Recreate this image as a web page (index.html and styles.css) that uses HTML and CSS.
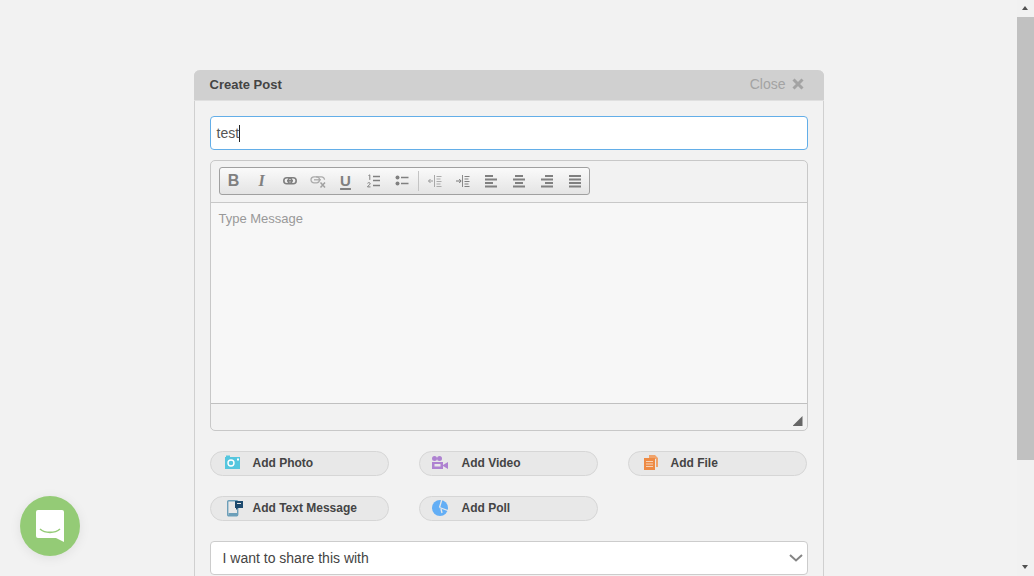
FILE: index.html
```html
<!DOCTYPE html>
<html lang="en">
<head>
  <meta charset="UTF-8">
  <title>Create Post</title>
  <link rel="stylesheet" href="styles.css">
</head>
<body>
  <div class="page">
    <div class="panel">
      <div class="panel-head">
        <span class="panel-title">Create Post</span>
        <span class="close">Close
          <svg width="12" height="12" viewBox="0 0 12 12"><path d="M1.5 1.5l9 9M10.500 1.500l-9 9" stroke="#a3a3a3" stroke-width="3" fill="none"/></svg>
        </span>
      </div>
      <div class="panel-body">
        <div class="title-field"><span class="typed">test</span></div>

        <div class="editor">
          <div class="editor-top">
            <div class="toolbar">
              <span class="tool tool-b">B</span>
              <span class="tool tool-i">I</span>
              <span class="tool">
                <svg width="16" height="16" viewBox="0 0 16 16"><g fill="none" stroke="#808080" stroke-width="1.600"><rect x="1.800" y="4.800" width="8" height="6" rx="3"/><rect x="6.200" y="4.800" width="8" height="6" rx="3"/></g><path d="M5 7.800h6" stroke="#808080" stroke-width="1.600"/></svg>
              </span>
              <span class="tool">
                <svg width="16" height="16" viewBox="0 0 16 16"><g fill="none" stroke="#ababab" stroke-width="1.300"><rect x="1" y="3.800" width="8.500" height="6" rx="3"/><path d="M6 3.800h5.500a3 3 0 0 1 3 3"/><path d="M4 6.800h7"/></g><path d="M10.500 9.500l4.500 5M15 9.500l-4.500 5" stroke="#a0a0a0" stroke-width="1.500"/></svg>
              </span>
              <span class="tool tool-u">U</span>
              <span class="tool">
                <svg width="16" height="16" viewBox="0 0 16 16"><path d="M7 3.500h7M7 7.500h7M7 12.500h7" stroke="#808080" stroke-width="1.300"/><path d="M2.500 2.500l1.300-.6v5M1.500 10.300c.8-1 3-.8 2.700.6-.2.8-2.700 2-2.700 3h3" fill="none" stroke="#808080" stroke-width="1"/></svg>
              </span>
              <span class="tool">
                <svg width="16" height="16" viewBox="0 0 16 16"><circle cx="3.500" cy="4.500" r="2" fill="#808080"/><circle cx="3.500" cy="10.500" r="2" fill="#808080"/><path d="M7 4.500h7.500M7 10.500h7.500" stroke="#808080" stroke-width="1.400"/></svg>
              </span>
              <span class="tool-sep"></span>
              <span class="tool">
                <svg width="16" height="16" viewBox="0 0 16 16"><path d="M7.500 2v12" stroke="#a8a8a8"/><path d="M9.500 3.500h5M9.500 6h4M9.500 8.500h5M9.500 11h4M9.500 13.500h5" stroke="#ababab"/><path d="M6 8H1.500M3.500 6L1.500 8l2 2" fill="none" stroke="#999"/></svg>
              </span>
              <span class="tool">
                <svg width="16" height="16" viewBox="0 0 16 16"><path d="M7.500 2v12" stroke="#8a8a8a"/><path d="M9.500 3.500h5M9.500 6h4M9.500 8.500h5M9.500 11h4M9.500 13.500h5" stroke="#808080"/><path d="M1 8h5M4.200 6l2 2-2 2" fill="none" stroke="#777"/></svg>
              </span>
              <span class="tool">
                <svg width="16" height="16" viewBox="0 0 16 16"><path d="M2 3h8M2 6.500h12M2 10h8M2 13.500h12" stroke="#808080" stroke-width="2"/></svg>
              </span>
              <span class="tool">
                <svg width="16" height="16" viewBox="0 0 16 16"><path d="M4 3h8M2 6.500h12M4 10h8M2 13.500h12" stroke="#808080" stroke-width="2"/></svg>
              </span>
              <span class="tool">
                <svg width="16" height="16" viewBox="0 0 16 16"><path d="M6 3h8M2 6.500h12M6 10h8M2 13.500h12" stroke="#808080" stroke-width="2"/></svg>
              </span>
              <span class="tool">
                <svg width="16" height="16" viewBox="0 0 16 16"><path d="M2 3h12M2 6.500h12M2 10h12M2 13.500h12" stroke="#808080" stroke-width="2"/></svg>
              </span>
            </div>
          </div>
          <div class="editor-text">Type Message</div>
          <div class="editor-foot"><span class="grip"></span></div>
        </div>

        <div class="attach-grid">
          <a class="attach">
            <svg width="18" height="18" viewBox="0 0 18 18"><path d="M0 3h1V1.500h4V3h10v12H0z" fill="#55c6de"/><circle cx="6" cy="9" r="3" fill="none" stroke="#fff" stroke-width="1.400"/><rect x="12" y="4.500" width="2" height="2" fill="#fff"/></svg>
            Add Photo
          </a>
          <a class="attach">
            <svg width="18" height="18" viewBox="3 0 18 18"><circle cx="3.500" cy="4.500" r="2.500" fill="#ae82d1"/><circle cx="8.500" cy="4.500" r="2.500" fill="#ae82d1"/><path d="M1 8h11v7H1z" fill="#ae82d1"/><path d="M3.500 10h6v2.500h-6z" fill="#e8e8e8"/><path d="M12 11l5-3v7l-5-3z" fill="#ae82d1"/></svg>
            Add Video
          </a>
          <a class="attach">
            <svg width="18" height="18" viewBox="-1 0 18 18"><path d="M5 1h6l3 3v9h-2V5H5z" fill="#f0a36b"/><path d="M0 4h11v12H0z" fill="#ee8a44"/><path d="M2 7.500h7M2 10h7M2 12.500h7" stroke="#f6d2b6" stroke-width="1.100"/></svg>
            Add File
          </a>
          <a class="attach">
            <svg width="18" height="18" viewBox="0 0 18 18"><rect x="2.700" y="1.700" width="10" height="15" rx="1" fill="none" stroke="#6d9fb9" stroke-width="1.400"/><rect x="3.500" y="14" width="8.500" height="2.500" fill="#6d9fb9"/><path d="M10 2h8v7h-5l-2 2V9h-1z" fill="#1d4a6e"/><path d="M12 4.500h4" stroke="#e8e8e8"/></svg>
            Add Text Message
          </a>
          <a class="attach">
            <svg width="18" height="18" viewBox="3 0 18 18"><circle cx="9" cy="9" r="8" fill="#63aef5"/><path d="M8.500 8.500L11 0M8.500 8.500L18 12M10 10l1 4" stroke="#e8e8e8" stroke-width="1.300" fill="none"/></svg>
            Add Poll
          </a>
        </div>

        <div class="share-select">
          I want to share this with
          <svg width="14" height="8" viewBox="0 0 14 8"><path d="M1 1l6 5.500L13 1" fill="none" stroke="#858585" stroke-width="2"/></svg>
        </div>
      </div>
    </div>
  </div>

  <div class="scrollbar">
    <span class="scroll-arrow scroll-up"></span>
    <span class="scroll-thumb"></span>
    <span class="scroll-arrow scroll-down"></span>
  </div>

  <div class="chat-bubble">
    <svg width="30" height="34" viewBox="0 0 30 34"><path d="M3 1h24a2 2 0 0 1 2 2v30l-8-4H3a2 2 0 0 1-2-2V3a2 2 0 0 1 2-2z" fill="#fff"/><path d="M5 20c5 4.500 15 4.500 20 0" fill="none" stroke="#94cb76" stroke-width="1.600"/></svg>
  </div>
</body>
</html>
```

FILE: styles.css
```css
html, body {
  height: 100%;
  overflow: hidden;
}

body {
  margin: 0;
  background: #f2f2f2;
  font-family: "Liberation Sans", Arial, sans-serif;
  color: #444;
}

.page {
  width: 1017px;
  padding-top: 70px;
  box-sizing: border-box;
}

.panel {
  width: 630px;
  margin: 0 auto;
  border: 1px solid #d0d0d0;
  border-top: none;
  border-radius: 6px 6px 0 0;
  box-sizing: border-box;
}

.panel-head {
  display: flex;
  justify-content: space-between;
  align-items: center;
  height: 31px;
  padding: 0 20px 2px 16px;
  box-sizing: border-box;
  background: #d0d0d0;
  border-bottom: 1px solid #e0e0e0;
  border-radius: 6px 6px 0 0;
  margin: 0 -1px;
}

.panel-title {
  font-size: 13px;
  font-weight: bold;
  color: #444;
}

.close {
  display: flex;
  align-items: center;
  gap: 6px;
  font-size: 14px;
  color: #a3a3a3;
}

.panel-body {
  padding: 15px 15px 40px;
}

.title-field {
  height: 34px;
  padding: 0 6px;
  line-height: 30px;
  box-sizing: border-box;
  background: #fff;
  border: 1px solid #63aee8;
  border-radius: 4px;
  font-size: 14px;
  color: #555;
}

.typed {
  display: inline-block;
  height: 17px;
  line-height: 17px;
  vertical-align: middle;
  border-right: 1px solid #222;
}

.editor {
  margin-top: 10px;
  border: 1px solid #c8c8c8;
  border-radius: 5px;
}

.editor-top {
  padding: 6px 8px 7px;
  border-bottom: 1px solid #c8c8c8;
}

.toolbar {
  display: inline-flex;
  align-items: center;
  height: 28px;
  box-sizing: border-box;
  border: 1px solid #a0a0a0;
  border-radius: 3px;
  background: linear-gradient(#fafafa, #e4e4e4);
  vertical-align: top;
}

.tool {
  display: flex;
  align-items: center;
  justify-content: center;
  width: 28px;
  height: 26px;
  font-size: 16px;
  color: #808080;
}

.tool-b {
  font-weight: bold;
}

.tool-i {
  font-family: "Liberation Serif", serif;
  font-weight: bold;
  font-style: italic;
}

.tool-u {
  font-weight: bold;
  font-size: 15px;
  padding-bottom: 1px;
  box-sizing: border-box;
  text-decoration: underline;
  text-decoration-thickness: 2px;
  text-underline-offset: 2px;
}

.tool-sep {
  width: 1px;
  height: 20px;
  margin: 0 2px;
  background: #c4c4c4;
}

.editor-text {
  height: 200px;
  padding: 8px;
  box-sizing: border-box;
  background: #f7f7f7;
  font-size: 13px;
  color: #999;
}

.editor-foot {
  display: flex;
  justify-content: flex-end;
  align-items: flex-end;
  height: 27px;
  padding: 0 4px 4px 0;
  box-sizing: border-box;
  border-top: 1px solid #c0c0c0;
}

.grip {
  width: 10px;
  height: 10px;
  background: #666;
  clip-path: polygon(100% 0, 100% 100%, 0 100%);
}

.attach-grid {
  display: grid;
  grid-template-columns: repeat(3, 179px);
  grid-auto-rows: 25px;
  gap: 20px 30px;
  margin-top: 20px;
}

.attach {
  display: flex;
  align-items: center;
  padding: 0 0 2px 14px;
  gap: 10px;
  border: 1px solid #d6d6d6;
  border-radius: 13px;
  background: #e8e8e8;
  font-size: 12px;
  font-weight: bold;
  color: #444;
}

.attach svg {
  overflow: visible;
}

.share-select {
  display: flex;
  justify-content: space-between;
  align-items: center;
  height: 34px;
  margin-top: 20px;
  padding: 0 4px 0 12px;
  box-sizing: border-box;
  background: #fff;
  border: 1px solid #ccc;
  border-radius: 4px;
  font-size: 14px;
  color: #444;
}

.scrollbar {
  position: fixed;
  top: 0;
  right: 0;
  bottom: 0;
  width: 17px;
  display: flex;
  flex-direction: column;
  background: #f1f1f1;
}

.scroll-arrow {
  flex: none;
  height: 17px;
  position: relative;
}

.scroll-arrow::after {
  content: "";
  position: absolute;
  left: 5px;
  top: 6px;
  border-left: 3.500px solid transparent;
  border-right: 3.500px solid transparent;
}

.scroll-up::after {
  border-bottom: 4px solid #505050;
}

.scroll-down::after {
  border-top: 4px solid #505050;
}

.scroll-thumb {
  flex: none;
  height: 443px;
  background: #c1c1c1;
}

.scroll-down {
  margin-top: auto;
}

.chat-bubble {
  position: fixed;
  left: 20px;
  bottom: 20px;
  width: 60px;
  height: 60px;
  display: flex;
  align-items: center;
  justify-content: center;
  border-radius: 50%;
  background: #94cb76;
  box-shadow: 0 2px 12px rgba(0, 0, 0, 0.08);
}
```
